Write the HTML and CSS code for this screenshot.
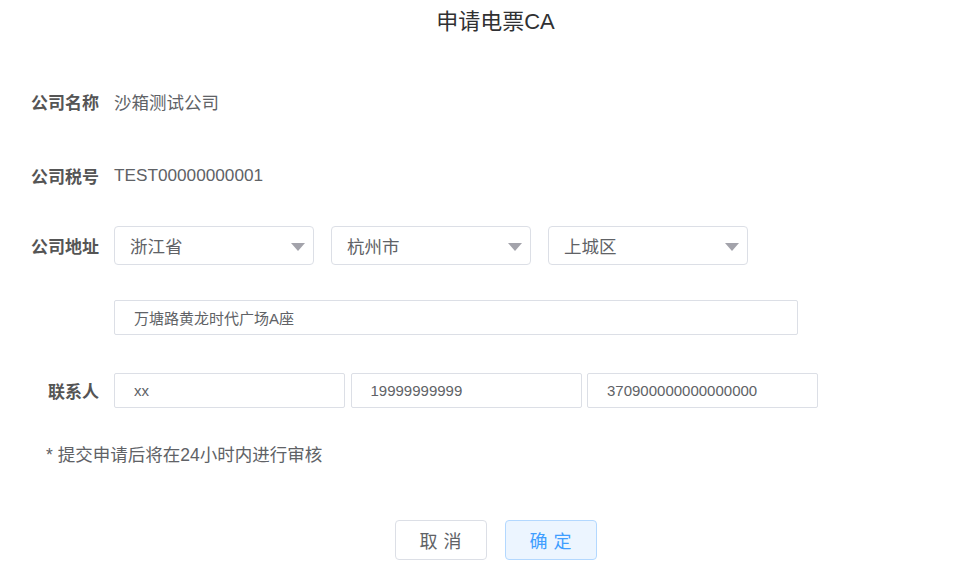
FILE: index.html
```html
<!DOCTYPE html>
<html lang="zh-CN">
<head>
  <meta charset="UTF-8" />
  <meta name="viewport" content="width=device-width, initial-scale=1.0"/>
  <title>申请电票CA</title>
  <link rel="stylesheet" href="styles.css">
</head>
<body>
  <div class="dialog">
    <h1 class="dialog-title">申请电票CA</h1>

    <div class="form">
      <div class="form-row row-name">
        <label class="form-label">公司名称</label>
        <span class="form-value cjk">沙箱测试公司</span>
      </div>

      <div class="form-row row-tax">
        <label class="form-label">公司税号</label>
        <span class="form-value latin">TEST00000000001</span>
      </div>

      <div class="form-row row-area">
        <label class="form-label">公司地址</label>
        <div class="select-group">
          <div class="select"><span>浙江省</span><i class="caret"></i></div>
          <div class="select"><span>杭州市</span><i class="caret"></i></div>
          <div class="select"><span>上城区</span><i class="caret"></i></div>
        </div>
      </div>

      <div class="form-row row-address">
        <label class="form-label"></label>
        <input class="input input-address" type="text" value="万塘路黄龙时代广场A座" />
      </div>

      <div class="form-row row-contact">
        <label class="form-label">联系人</label>
        <div class="input-group">
          <input class="input input-contact" type="text" value="xx" />
          <input class="input input-contact" type="text" value="19999999999" />
          <input class="input input-contact" type="text" value="370900000000000000" />
        </div>
      </div>

      <p class="form-note">* 提交申请后将在24小时内进行审核</p>
    </div>

    <div class="dialog-footer">
      <button class="btn btn-cancel">取消</button>
      <button class="btn btn-confirm">确定</button>
    </div>
  </div>
</body>
</html>
```

FILE: styles.css
```css
body {
  margin: 0;
  font-family: "Liberation Sans", "Noto Sans CJK SC", sans-serif;
  color: #606266;
  background: #fff;
}

.dialog {
  width: 960px;
}

.dialog-title {
  margin: 0;
  padding-left: 31px;
  height: 44px;
  line-height: 44px;
  text-align: center;
  font-size: 22px;
  font-weight: normal;
  color: #303133;
}

.form-row {
  display: flex;
  align-items: center;
}

.form-label {
  width: 99px;
  margin-right: 15px;
  text-align: right;
  font-size: 17px;
  font-weight: bold;
  color: #555;
  flex-shrink: 0;
}

.form-value {
  color: #606266;
}

.form-value.cjk {
  font-size: 17.5px;
}

.form-value.latin {
  font-size: 17.2px;
}

.row-name {
  height: 40px;
  margin-top: 37px;
}

.row-tax {
  height: 40px;
  margin-top: 34px;
}

.row-area {
  height: 39px;
  margin-top: 31px;
}

.select-group {
  display: flex;
  gap: 17px;
}

.select {
  box-sizing: border-box;
  width: 200px;
  height: 39px;
  padding: 0 8px 0 15px;
  border: 1px solid #dcdfe6;
  border-radius: 4px;
  display: flex;
  align-items: center;
  justify-content: space-between;
  font-size: 17.5px;
  color: #606266;
}

.caret {
  width: 0;
  height: 0;
  border-left: 7px solid transparent;
  border-right: 7px solid transparent;
  border-top: 8px solid #a3a3ab;
  margin-top: 2px;
}

.row-address {
  margin-top: 35px;
}

.input {
  box-sizing: border-box;
  height: 35px;
  border: 1px solid #dcdfe6;
  border-radius: 2px;
  padding: 0 19px;
  font-family: "Liberation Sans", "Noto Sans CJK SC", sans-serif;
  font-size: 15px;
  color: #606266;
  background: #fff;
  outline: none;
}

.input-address {
  width: 684px;
}

.row-contact {
  margin-top: 38px;
}

.input-group {
  display: flex;
  gap: 5.5px;
}

.input-contact {
  width: 231px;
}

.form-note {
  margin: 35px 0 0;
  padding-left: 46px;
  line-height: 24px;
  font-size: 17.5px;
  color: #606266;
}

.dialog-footer {
  display: flex;
  justify-content: center;
  gap: 18px;
  padding-left: 31px;
  margin-top: 53px;
}

.btn {
  box-sizing: border-box;
  width: 92px;
  height: 40px;
  border-radius: 4px;
  font-family: "Liberation Sans", "Noto Sans CJK SC", sans-serif;
  font-size: 18px;
  letter-spacing: 6px;
  padding: 0 0 0 6px;
  cursor: pointer;
}

.btn-cancel {
  border: 1px solid #dcdfe6;
  background: #fff;
  color: #606266;
}

.btn-confirm {
  border: 1px solid #b3d8ff;
  background: #ecf5ff;
  color: #409eff;
}
```
